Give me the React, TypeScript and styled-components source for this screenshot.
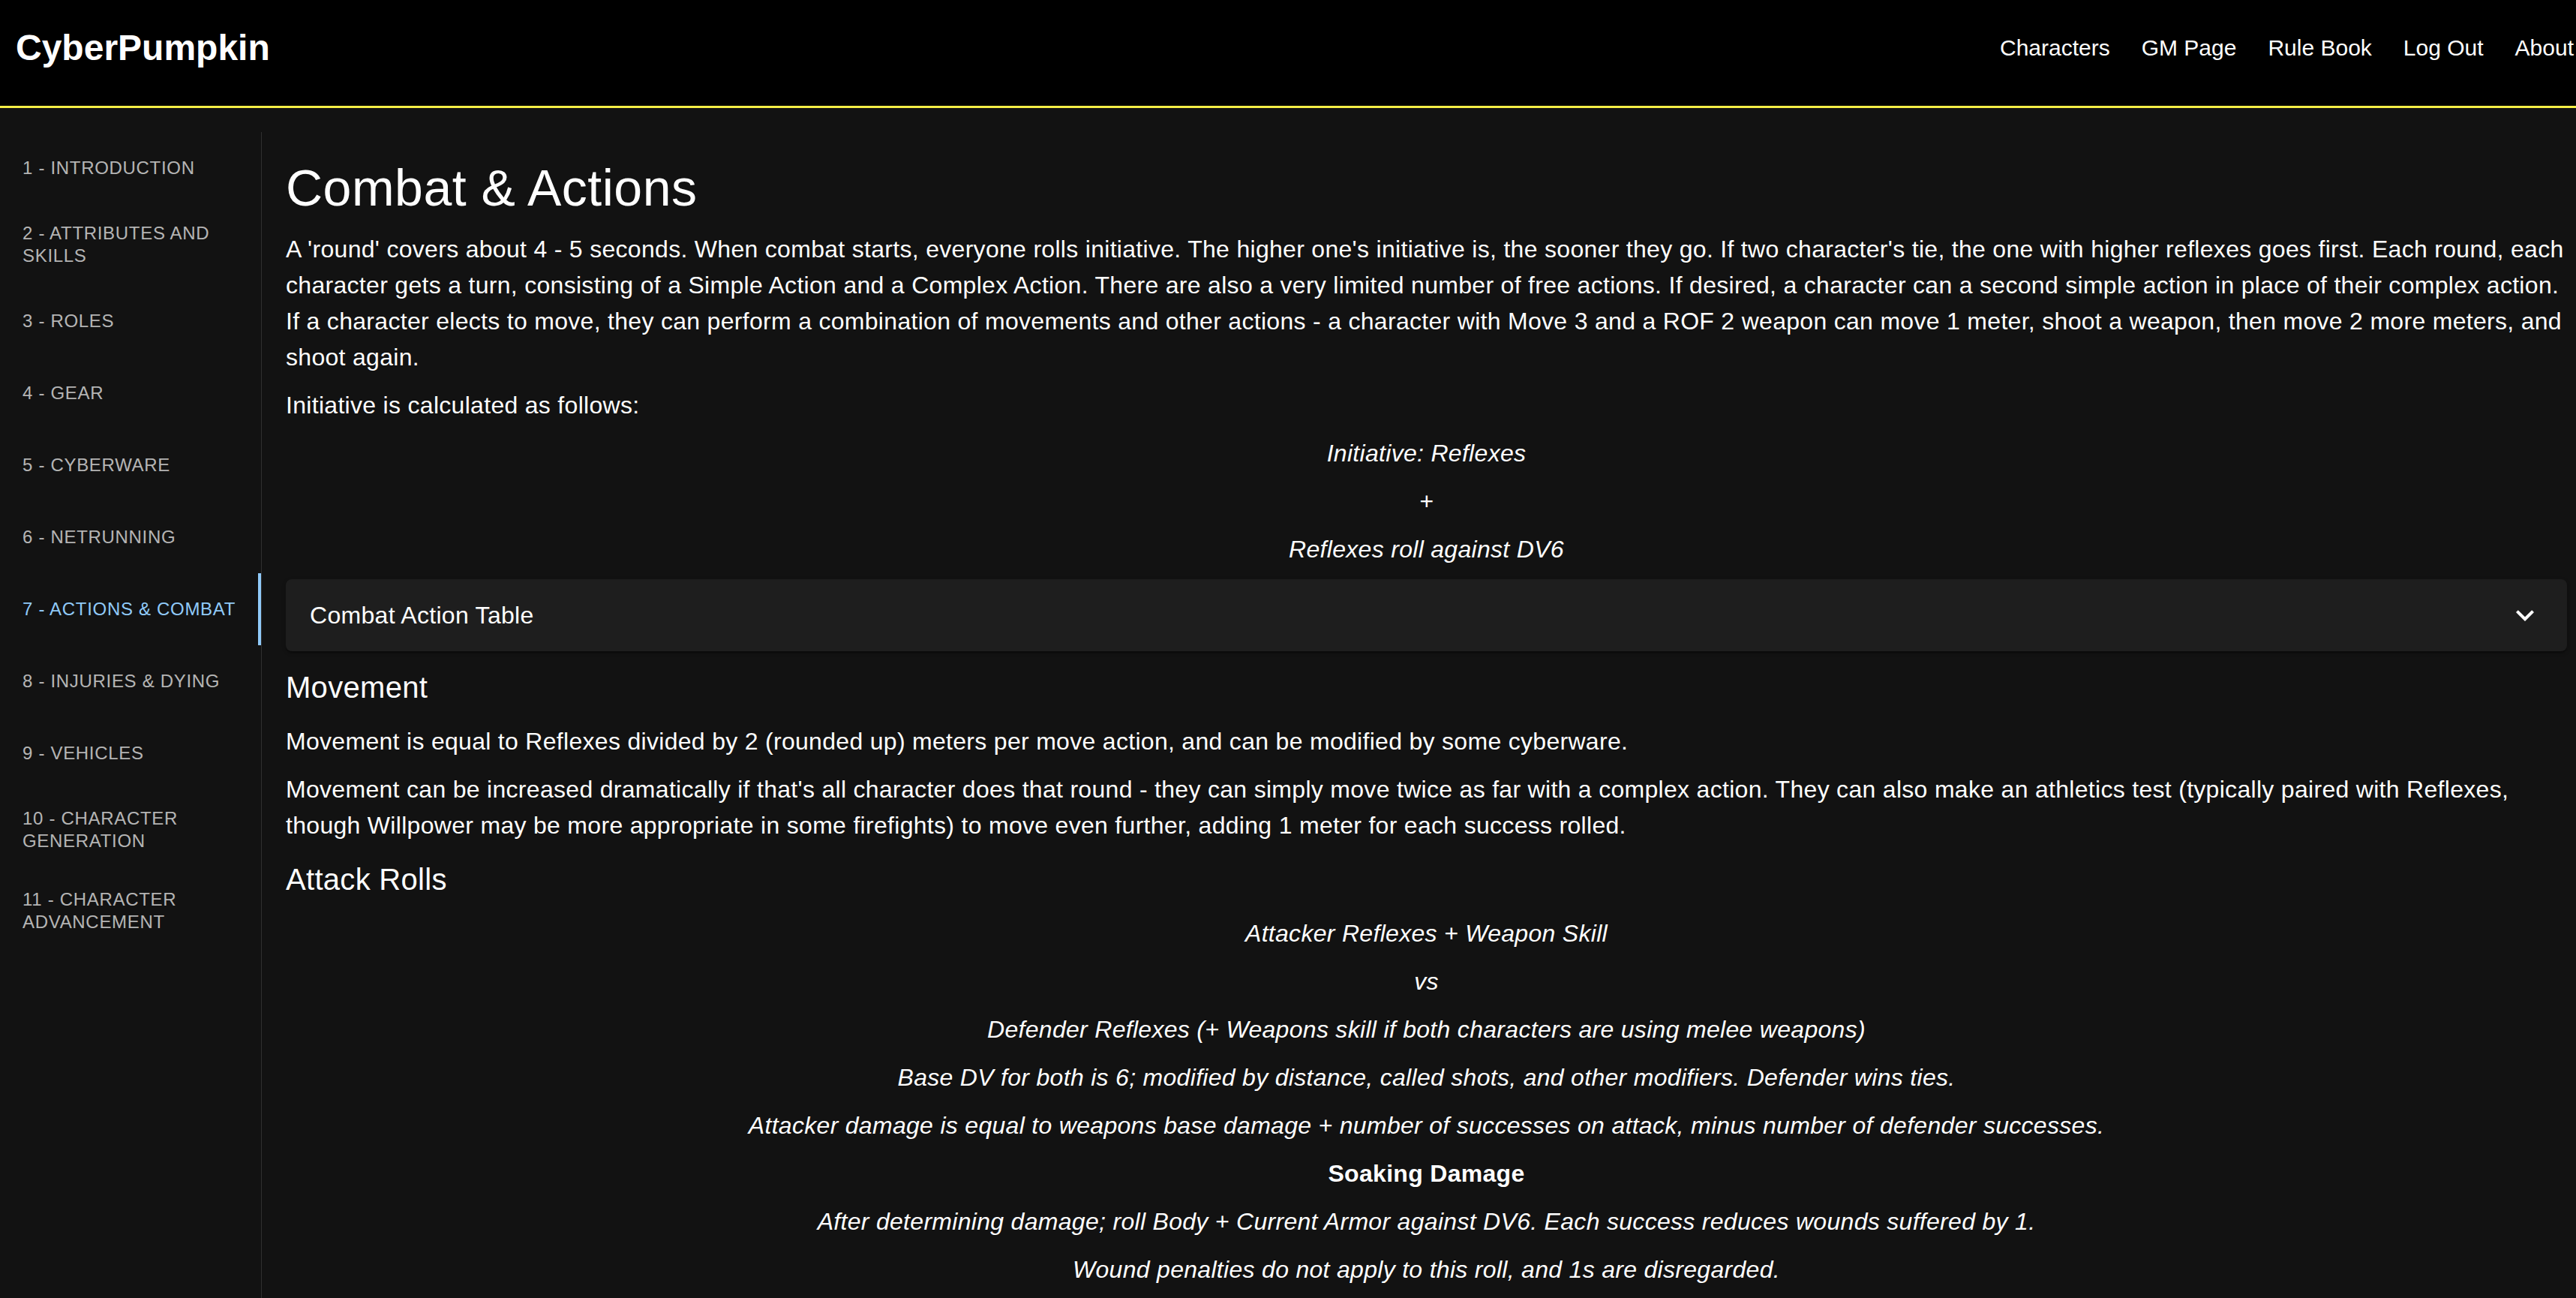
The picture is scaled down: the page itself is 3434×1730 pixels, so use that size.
import React from "react";
import styled, { createGlobalStyle } from "styled-components";

const GlobalStyle = createGlobalStyle`
  *, *::before, *::after { box-sizing: border-box; }
  html, body {
    margin: 0;
    padding: 0;
    background: #121212;
  }
  body {
    font-family: "Liberation Sans", Arial, Helvetica, sans-serif;
    color: #ffffff;
  }
`;

const Header = styled.header`
  height: 144px;
  background: #000000;
  border-bottom: 3px solid #f4ee45;
  padding: 0 3px 14px 21px;
  display: flex;
  align-items: center;
  justify-content: space-between;
`;

const Logo = styled.div`
  font-size: 48px;
  font-weight: 700;
  line-height: 56px;
  color: #ffffff;
`;

const Nav = styled.nav`
  display: flex;
  align-items: center;
  gap: 42px;
`;

const NavLink = styled.a`
  font-size: 30px;
  line-height: 40px;
  color: #ffffff;
  text-decoration: none;
  cursor: pointer;
`;

const Layout = styled.div`
  margin-top: 32px;
  display: flex;
  align-items: stretch;
  min-height: calc(100vh - 176px);
`;

const Sidebar = styled.aside`
  width: 349px;
  flex: 0 0 349px;
  border-right: 1px solid #2f2f2f;
  display: flex;
  flex-direction: column;
`;

const TabItem = styled.div<{ $active?: boolean }>`
  position: relative;
  min-height: 96px;
  padding: 24px 30px;
  display: flex;
  align-items: center;
  font-size: 24px;
  line-height: 30px;
  letter-spacing: 0.69px;
  text-transform: uppercase;
  color: ${(p) => (p.$active ? "#90caf9" : "rgba(255, 255, 255, 0.7)")};
  cursor: pointer;

  &::after {
    content: "";
    display: ${(p) => (p.$active ? "block" : "none")};
    position: absolute;
    top: 0;
    bottom: 0;
    right: 0;
    width: 4px;
    background: #90caf9;
  }
`;

const Main = styled.main`
  flex: 1;
  min-width: 0;
  padding: 32px 12px 32px 32px;
  display: flex;
  flex-direction: column;
  gap: 16px;
`;

const Title = styled.h1`
  margin: 0;
  font-size: 68px;
  font-weight: 400;
  line-height: 84px;
  letter-spacing: 0.5px;
`;

const SectionHeading = styled.h2`
  margin: 0;
  font-size: 40px;
  font-weight: 400;
  line-height: 64px;
  letter-spacing: 0.3px;
`;

const Paragraph = styled.p`
  margin: 0;
  font-size: 32px;
  line-height: 48px;
  letter-spacing: 0.3px;
`;

const Formula = styled.p<{ $bold?: boolean }>`
  margin: 0;
  font-size: 32px;
  line-height: 48px;
  letter-spacing: 0.3px;
  text-align: center;
  font-style: ${(p) => (p.$bold ? "normal" : "italic")};
  font-weight: ${(p) => (p.$bold ? 700 : 400)};
`;

const Accordion = styled.div`
  height: 96px;
  padding: 0 32px;
  background: #1e1e1e;
  border-radius: 8px;
  display: flex;
  align-items: center;
  justify-content: space-between;
  box-shadow: 0 4px 2px -2px rgba(0, 0, 0, 0.2), 0 2px 2px 0 rgba(0, 0, 0, 0.14),
    0 2px 6px 0 rgba(0, 0, 0, 0.12);
  cursor: pointer;
`;

const AccordionTitle = styled.span`
  font-size: 32px;
  line-height: 48px;
  letter-spacing: 0.3px;
`;

const ExpandIcon = () => (
  <svg width="48" height="48" viewBox="0 0 24 24" fill="#ffffff" aria-hidden="true">
    <path d="M16.59 8.59 12 13.17 7.41 8.59 6 10l6 6 6-6z" />
  </svg>
);

const chapters = [
  "1 - Introduction",
  "2 - Attributes and Skills",
  "3 - Roles",
  "4 - Gear",
  "5 - Cyberware",
  "6 - Netrunning",
  "7 - Actions & Combat",
  "8 - Injuries & Dying",
  "9 - Vehicles",
  "10 - Character Generation",
  "11 - Character Advancement",
];

const navLinks = ["Characters", "GM Page", "Rule Book", "Log Out", "About"];

const attackLines: { text: string; bold?: boolean }[] = [
  { text: "Attacker Reflexes + Weapon Skill" },
  { text: "vs" },
  { text: "Defender Reflexes (+ Weapons skill if both characters are using melee weapons)" },
  { text: "Base DV for both is 6; modified by distance, called shots, and other modifiers. Defender wins ties." },
  { text: "Attacker damage is equal to weapons base damage + number of successes on attack, minus number of defender successes." },
  { text: "Soaking Damage", bold: true },
  { text: "After determining damage; roll Body + Current Armor against DV6. Each success reduces wounds suffered by 1." },
  { text: "Wound penalties do not apply to this roll, and 1s are disregarded." },
];

export default function App() {
  return (
    <>
      <GlobalStyle />
      <Header>
        <Logo>CyberPumpkin</Logo>
        <Nav>
          {navLinks.map((l) => (
            <NavLink key={l}>{l}</NavLink>
          ))}
        </Nav>
      </Header>
      <Layout>
        <Sidebar>
          {chapters.map((c, i) => (
            <TabItem key={c} $active={i === 6}>
              {c}
            </TabItem>
          ))}
        </Sidebar>
        <Main>
          <Title>Combat &amp; Actions</Title>
          <Paragraph>
            A 'round' covers about 4 - 5 seconds. When combat starts, everyone rolls initiative. The
            higher one's initiative is, the sooner they go. If two character's tie, the one with higher
            reflexes goes first. Each round, each character gets a turn, consisting of a Simple Action
            and a Complex Action. There are also a very limited number of free actions. If desired, a
            character can a second simple action in place of their complex action. If a character
            elects to move, they can perform a combination of movements and other actions - a character
            with Move 3 and a ROF 2 weapon can move 1 meter, shoot a weapon, then move 2 more meters, and
            shoot again.
          </Paragraph>
          <Paragraph>Initiative is calculated as follows:</Paragraph>
          <Formula>Initiative: Reflexes</Formula>
          <Formula>+</Formula>
          <Formula>Reflexes roll against DV6</Formula>
          <Accordion>
            <AccordionTitle>Combat Action Table</AccordionTitle>
            <ExpandIcon />
          </Accordion>
          <SectionHeading>Movement</SectionHeading>
          <Paragraph>
            Movement is equal to Reflexes divided by 2 (rounded up) meters per move action, and can be
            modified by some cyberware.
          </Paragraph>
          <Paragraph>
            Movement can be increased dramatically if that's all character does that round - they can
            simply move twice as far with a complex action. They can also make an athletics test
            (typically paired with Reflexes, though Willpower may be more appropriate in some
            firefights) to move even further, adding 1 meter for each success rolled.
          </Paragraph>
          <SectionHeading>Attack Rolls</SectionHeading>
          {attackLines.map((l) => (
            <Formula key={l.text} $bold={l.bold}>
              {l.text}
            </Formula>
          ))}
        </Main>
      </Layout>
    </>
  );
}
